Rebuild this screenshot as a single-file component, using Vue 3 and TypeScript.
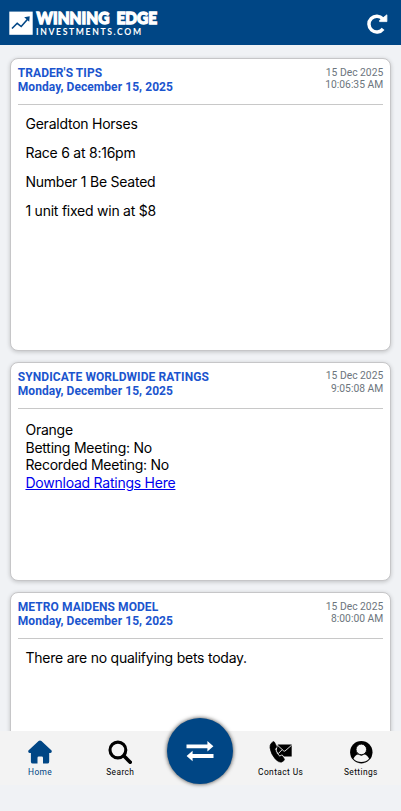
<script setup lang="ts">
interface Tip {
  title: string
  day: string
  date: string
  time: string
  kind: 'spaced' | 'compact'
  size: 'tall' | 'medium'
  lines: string[]
  link?: string
}

const tips: Tip[] = [
  {
    title: "TRADER'S TIPS",
    day: 'Monday, December 15, 2025',
    date: '15 Dec 2025',
    time: '10:06:35 AM',
    kind: 'spaced',
    size: 'tall',
    lines: ['Geraldton Horses', 'Race 6 at 8:16pm', 'Number 1 Be Seated', '1 unit fixed win at $8'],
  },
  {
    title: 'SYNDICATE WORLDWIDE RATINGS',
    day: 'Monday, December 15, 2025',
    date: '15 Dec 2025',
    time: '9:05:08 AM',
    kind: 'compact',
    size: 'medium',
    lines: ['Orange', 'Betting Meeting: No', 'Recorded Meeting: No'],
    link: 'Download Ratings Here',
  },
  {
    title: 'METRO MAIDENS MODEL',
    day: 'Monday, December 15, 2025',
    date: '15 Dec 2025',
    time: '8:00:00 AM',
    kind: 'spaced',
    size: 'tall',
    lines: ['There are no qualifying bets today.'],
  },
]
</script>

<template>
  <div class="app">
    <header class="topbar">
      <svg class="logo" width="150" height="26" viewBox="0 0 150 26" role="img" aria-label="Winning Edge Investments.com">
        <rect x="0.3" y="0.6" width="23.4" height="23.2" fill="#fff" />
        <path d="M3 17.5 L8.2 12.3 L12.2 15.5 L19 7.8" fill="none" stroke="#004685" stroke-width="1.6" />
        <path d="M15.2 6.2 L20.7 5.2 L20.2 10.8 Z" fill="#004685" />
        <text class="brand" x="27.6" y="13.4" textLength="72.8" lengthAdjust="spacingAndGlyphs">WINNING</text>
        <text class="brand" x="107.5" y="13.4" textLength="40.6" lengthAdjust="spacingAndGlyphs">EDGE</text>
        <text class="brand-sub" x="27" y="23.5" textLength="105" lengthAdjust="spacing">INVESTMENTS.COM</text>
      </svg>
      <button class="icon-button" aria-label="Refresh">
        <svg width="22" height="22" viewBox="0 0 22 22">
          <path d="M17.1 15.9 A7.9 7.9 0 1 1 16.8 5.9" fill="none" stroke="#fff" stroke-width="3.5" />
          <path d="M20.9 1.8 V8.6 H13.6 V7.4 Z" fill="#fff" stroke="#fff" stroke-width="0.8" stroke-linejoin="round" />
        </svg>
      </button>
    </header>

    <main class="feed">
      <article v-for="tip in tips" :key="tip.title" class="card" :class="tip.size">
        <div class="card-head">
          <h2 class="title">{{ tip.title }}<br />{{ tip.day }}</h2>
          <div class="stamp">{{ tip.date }}<br />{{ tip.time }}</div>
        </div>
        <div class="card-body" :class="tip.kind">
          <p v-for="line in tip.lines" :key="line">{{ line }}</p>
          <p v-if="tip.link"><a href="#">{{ tip.link }}</a></p>
        </div>
      </article>
    </main>

    <nav class="tabs">
      <a class="tab active">
        <svg width="24" height="24" viewBox="0 0 24 24">
          <path d="M12 0.5 Q12.7 0.5 13.4 1.1 L23.6 10.6 Q24.3 12.5 22.4 13 H21.2 V21.7 Q21.2 23.6 19.3 23.6 H15 V17.8 Q15 16.5 13.7 16.5 H10.8 Q9.5 16.5 9.5 17.8 V23.6 H4.8 Q2.9 23.6 2.9 21.7 V13 H1.6 Q-0.3 12.5 0.4 10.6 L10.6 1.1 Q11.3 0.5 12 0.5Z" fill="currentColor" />
        </svg>
        <span>Home</span>
      </a>
      <a class="tab">
        <svg width="24" height="24" viewBox="0 0 24 24">
          <circle cx="9.9" cy="10" r="7.9" fill="none" stroke="currentColor" stroke-width="3.1" />
          <path d="M16 16 L22.2 22.2" stroke="currentColor" stroke-width="3.7" stroke-linecap="round" />
        </svg>
        <span>Search</span>
      </a>
      <div class="tab-gap">
        <button class="swap" aria-label="Switch">
          <svg width="28" height="22" viewBox="0 0 28 22">
            <path d="M0.5 4.4 H21.4 V1 L27.4 6.3 L21.4 11.6 V8.2 H0.5 Z M27.5 17.9 H6.6 V21.3 L0.6 16 L6.6 10.7 V14.1 H27.5 Z" fill="#fff" />
          </svg>
        </button>
      </div>
      <a class="tab">
        <svg width="24" height="24" viewBox="0 0 24 24">
          <path d="M2 3.6 L3.8 1.9 Q4.7 1.2 5.4 2.1 L7.5 6.2 Q7.8 7 7.1 7.7 L5.8 9 Q7 13.5 10.4 16.8 L12.1 15.9 Q12.9 15.6 13.5 16.3 L15.3 19.1 Q15.6 20 14.9 20.6 L12.8 22 Q9.8 22.9 6.5 19.2 Q1.9 14.2 1 7.8 Q0.9 5 2 3.6Z" fill="currentColor" stroke="currentColor" stroke-width="0.7" />
          <path d="M8.8 4.5 H22.7 V16.4 H15 L13 14.4 L10.4 15.5 L7.6 10.6 L8.2 7.6 Z" fill="currentColor" />
          <path d="M8.3 5 L14.8 11 Q15.4 11.4 16 11 L22.6 5.2 M13 9.8 L9.3 13.6" fill="none" stroke="#f3f3f3" stroke-width="0.9" />
        </svg>
        <span>Contact Us</span>
      </a>
      <a class="tab">
        <svg width="24" height="24" viewBox="0 0 24 24">
          <circle cx="12.3" cy="12.2" r="11.2" fill="currentColor" />
          <path d="M4.5 18.7 Q6.2 14.8 9.3 14.6 Q12.3 16.7 15.3 14.6 Q18.2 14.8 20.1 18.7 Q17 22 12.3 22 Q7.6 22 4.5 18.7Z" fill="#f3f3f3" />
          <circle cx="12.3" cy="9.4" r="5.3" fill="#f3f3f3" stroke="currentColor" stroke-width="0.9" />
        </svg>
        <span>Settings</span>
      </a>
    </nav>
  </div>
</template>

<style>
body {
  margin: 0;
  background: #f0f2f5;
}
</style>

<style scoped>
.app {
  display: flex;
  flex-direction: column;
  height: 811px;
  overflow: hidden;
  background: #f0f2f5;
  font-family: Roboto, 'Liberation Sans', sans-serif;
}

.topbar {
  flex: none;
  box-sizing: border-box;
  height: 45px;
  padding: 0 13px 0 9px;
  display: flex;
  align-items: center;
  justify-content: space-between;
  background: #004685;
}

.logo {
  margin-top: 3px;
  overflow: visible;
}

.brand {
  font: 900 16.6px Lato, sans-serif;
  fill: #fff;
  stroke: #fff;
  stroke-width: 1.3px;
}

.brand-sub {
  font: 700 8.6px Lato, sans-serif;
  fill: #fff;
}

button {
  display: flex;
  align-items: center;
  justify-content: center;
  padding: 0;
  border: 0;
  background: none;
}

.icon-button {
  margin-top: 3px;
}

.feed {
  flex: 1;
  min-height: 0;
  overflow: hidden;
  display: flex;
  flex-direction: column;
  gap: 11.4px;
  padding: 13.2px 10.4px 0;
}

.card {
  flex: none;
  box-sizing: border-box;
  padding: 6.7px 6.4px 0;
  border: 1px solid #c6c6c8;
  border-radius: 8px;
  background: #fff;
  box-shadow: 0 1px 4px rgba(0, 0, 0, 0.2);
}

.tall {
  height: 292.4px;
}

.medium {
  height: 219px;
}

.card-head {
  box-sizing: border-box;
  height: 39.2px;
  display: flex;
  justify-content: space-between;
  border-bottom: 1px solid #c8c8c8;
}

.title {
  margin: 0;
  font-size: 12px;
  font-weight: 700;
  line-height: 14.4px;
  letter-spacing: 0.07px;
  color: #1b55ce;
}

.stamp {
  padding-top: 0.8px;
  font-size: 10.3px;
  line-height: 12.3px;
  color: #6c757d;
  text-align: right;
}

.card-body {
  padding: 9.6px 7.7px 0;
  font-family: Inter, 'Liberation Sans', sans-serif;
  font-size: 14px;
  line-height: 18px;
  letter-spacing: -0.24px;
  color: #000;
}

.card-body p {
  margin: 0;
}

.spaced p {
  margin-bottom: 11px;
}

.compact {
  padding-top: 12px;
  line-height: 17.8px;
}

a {
  color: #0000ee;
}

.tabs {
  flex: none;
  box-sizing: border-box;
  height: 54px;
  margin-bottom: 26px;
  display: grid;
  grid-template-columns: repeat(5, 1fr);
  background: #f3f3f3;
}

.tab {
  display: flex;
  flex-direction: column;
  align-items: center;
  padding-top: 9px;
  gap: 2px;
  font-size: 8.4px;
  font-weight: 400;
  line-height: 12px;
  letter-spacing: 0.42px;
  color: #000;
  white-space: nowrap;
}

.active {
  color: #004685;
}

.tab-gap {
  position: relative;
}

.swap {
  position: absolute;
  top: -13px;
  left: 50%;
  width: 66px;
  height: 66px;
  margin-left: -33px;
  border-radius: 50%;
  background: #004685;
  box-shadow: 0 0 4px rgba(0, 0, 0, 0.75);
}
</style>
